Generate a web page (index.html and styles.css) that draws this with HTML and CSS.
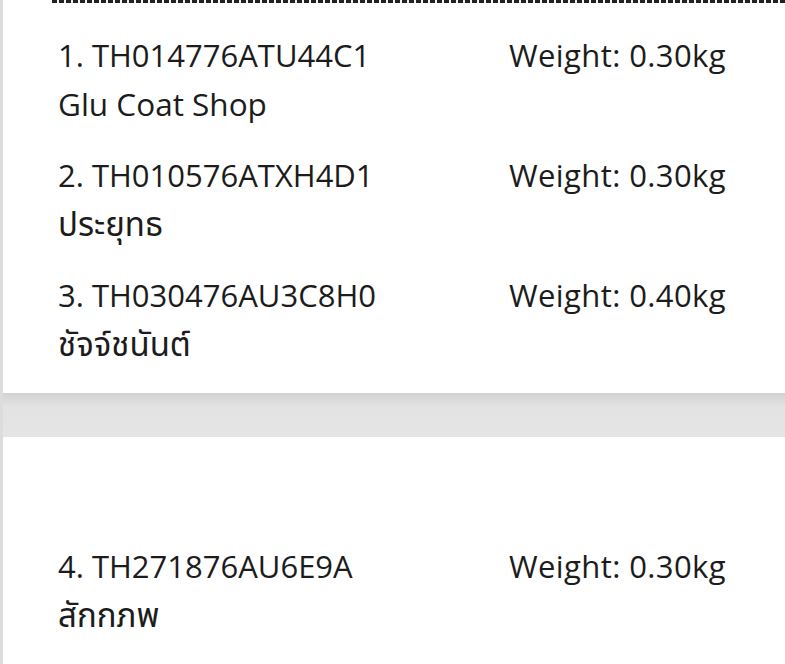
FILE: index.html
```html
<!DOCTYPE html>
<html>
<head>
<meta charset="utf-8">
<link rel="stylesheet" href="styles.css">
</head>
<body>
<div class="page">
  <section class="card card-first">
    <div class="dash"></div>
    <div class="row">
      <div class="line"><span class="code">1. TH014776ATU44C1</span><span class="weight">Weight: 0.30kg</span></div>
      <div class="name">Glu Coat Shop</div>
    </div>
    <div class="row">
      <div class="line"><span class="code">2. TH010576ATXH4D1</span><span class="weight">Weight: 0.30kg</span></div>
      <div class="name thai">ประยุทธ</div>
    </div>
    <div class="row">
      <div class="line"><span class="code">3. TH030476AU3C8H0</span><span class="weight">Weight: 0.40kg</span></div>
      <div class="name thai">ชัจจ์ชนันต์</div>
    </div>
  </section>
  <div class="gap"></div>
  <section class="card card-second">
    <div class="row">
      <div class="line"><span class="code">4. TH271876AU6E9A</span><span class="weight">Weight: 0.30kg</span></div>
      <div class="name thai">สักกภพ</div>
    </div>
  </section>
</div>
</body>
</html>
```

FILE: styles.css
```css
html, body {
  margin: 0;
  padding: 0;
  background: #ffffff;
}
body {
  font-family: "Open Sans", "Noto Sans", "Noto Sans Thai", sans-serif;
  color: #1c1c1c;
  width: 785px;
  height: 664px;
  overflow: hidden;
}
.page {
  border-left: 3px solid #dcdcdc;
  height: 664px;
  box-sizing: border-box;
}
.card {
  background: #fff;
  padding-left: 55px;
}
.card-first {
  height: 393px;
  box-sizing: border-box;
  padding-top: 31px;
}
.dash {
  height: 3px;
  margin-top: -31px;
  margin-bottom: 28px;
  margin-left: -6px;
  background: repeating-linear-gradient(90deg, #222 0 5px, #f4f4f4 5px 7px);
}
.gap {
  height: 44px;
  background: linear-gradient(180deg, #d2d2d2 0, #e3e3e3 14px, #e4e4e4 100%);
}
.card-second {
  padding-top: 105px;
}
.row {
  height: 120px;
}
.line {
  display: flex;
  font-size: 31px;
  line-height: 48px;
}
.code {
  width: 451px;
}
.weight {
  letter-spacing: 0.4px;
}
.name {
  font-size: 31.5px;
  line-height: 50px;
}
.name.thai {
  font-size: 33px;
}
```
